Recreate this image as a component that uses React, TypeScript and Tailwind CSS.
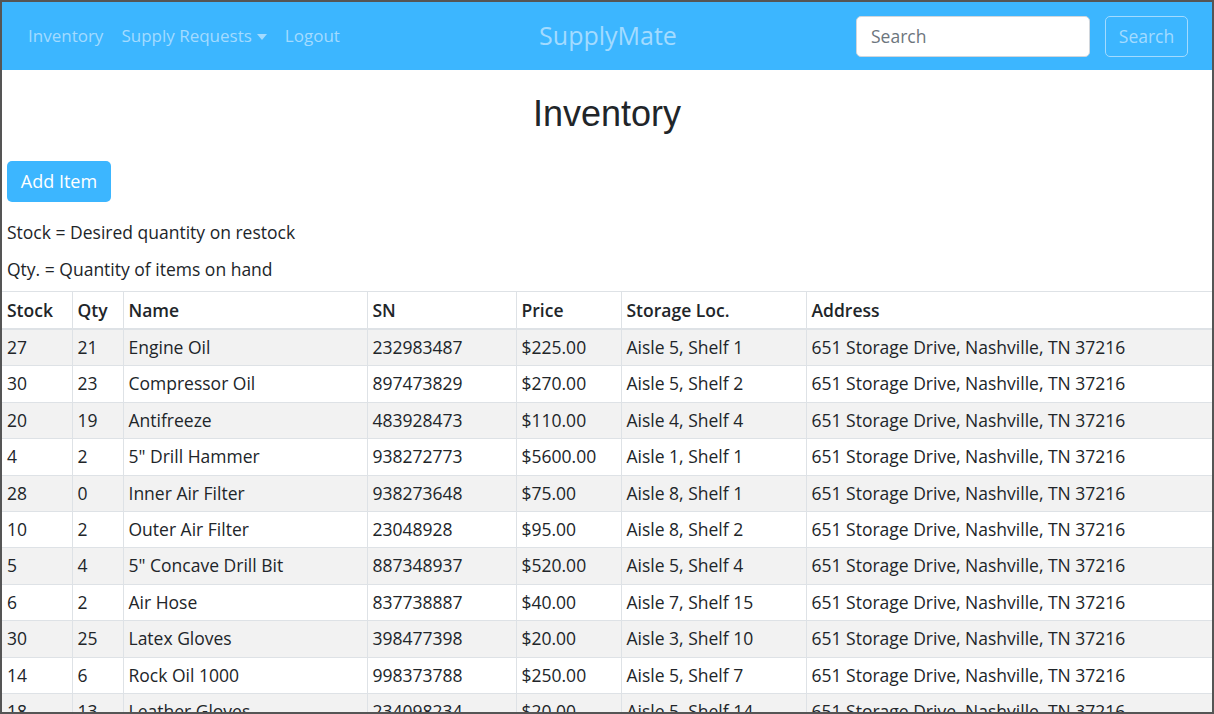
import { useState } from "react"

const items = [
  { stock: 27, qty: 21, name: "Engine Oil", sn: "232983487", price: "$225.00", loc: "Aisle 5, Shelf 1" },
  { stock: 30, qty: 23, name: "Compressor Oil", sn: "897473829", price: "$270.00", loc: "Aisle 5, Shelf 2" },
  { stock: 20, qty: 19, name: "Antifreeze", sn: "483928473", price: "$110.00", loc: "Aisle 4, Shelf 4" },
  { stock: 4, qty: 2, name: '5" Drill Hammer', sn: "938272773", price: "$5600.00", loc: "Aisle 1, Shelf 1" },
  { stock: 28, qty: 0, name: "Inner Air Filter", sn: "938273648", price: "$75.00", loc: "Aisle 8, Shelf 1" },
  { stock: 10, qty: 2, name: "Outer Air Filter", sn: "23048928", price: "$95.00", loc: "Aisle 8, Shelf 2" },
  { stock: 5, qty: 4, name: '5" Concave Drill Bit', sn: "887348937", price: "$520.00", loc: "Aisle 5, Shelf 4" },
  { stock: 6, qty: 2, name: "Air Hose", sn: "837738887", price: "$40.00", loc: "Aisle 7, Shelf 15" },
  { stock: 30, qty: 25, name: "Latex Gloves", sn: "398477398", price: "$20.00", loc: "Aisle 3, Shelf 10" },
  { stock: 14, qty: 6, name: "Rock Oil 1000", sn: "998373788", price: "$250.00", loc: "Aisle 5, Shelf 7" },
  { stock: 18, qty: 13, name: "Leather Gloves", sn: "234098234", price: "$20.00", loc: "Aisle 5, Shelf 14" },
]

const ADDRESS = "651 Storage Drive, Nashville, TN 37216"

function Navbar() {
  const [query, setQuery] = useState("")
  return (
    <nav className="flex h-[68px] items-center bg-[#3cb6ff] pl-[26px] pr-[24px] text-[17px]">
      <div className="flex flex-1 items-center gap-[18px] text-[#a3dbff]">
        <a>Inventory</a>
        <a className="flex items-center gap-[5px]">
          Supply Requests
          <span className="mt-[1px] h-0 w-0 border-x-[5px] border-t-[6px] border-x-transparent border-t-[#a3dbff]" />
        </a>
        <a>Logout</a>
      </div>
      <div className="text-[25px] text-[#a3dbff]">SupplyMate</div>
      <div className="flex flex-1 items-center justify-end gap-[15px]">
        <input
          value={query}
          onChange={(e) => setQuery(e.target.value)}
          placeholder="Search"
          className="h-[41px] w-[234px] rounded-[5px] border border-[#d0d6dc] bg-white px-[14px] text-[17.5px] text-gray-700 outline-none placeholder:text-[#6c757d]"
        />
        <button className="h-[41px] w-[83px] rounded-[5px] border border-[#a3dbff] text-[17.5px] text-[#a3dbff]">
          Search
        </button>
      </div>
    </nav>
  )
}

const cell = "border-l border-t border-[#dee2e6] px-[5px] py-[5px] leading-[25.4px]"
const head = "border-b-2 border-l border-[#dee2e6] px-[5px] py-[5px] leading-[26px] font-semibold"

export default function App() {
  return (
    <div
      className="h-[714px] overflow-hidden border-2 border-[#555] bg-white text-[17.5px] text-[#212529]"
      style={{ fontFamily: "'Open Sans', 'Noto Sans', sans-serif" }}
    >
      <Navbar />
      <h1
        className="mt-[22px] text-center text-[36px] leading-[44px]"
        style={{ fontFamily: "'Liberation Sans', Arial, sans-serif" }}
      >
        Inventory
      </h1>
      <div className="px-[5px]">
        <button className="mt-[25px] h-[41px] w-[104px] rounded-[5px] bg-[#3cb6ff] text-[18px] text-white">
          Add Item
        </button>
        <p className="mt-[17px] leading-[26px]">Stock = Desired quantity on restock</p>
        <p className="mt-[11px] leading-[26px]">Qty. = Quantity of items on hand</p>
      </div>
      <table className="mt-[9px] w-full border-collapse">
        <thead>
          <tr className="border-t border-[#dee2e6] text-left">
            <th className={`w-[70px] ${head} border-l-0`}>Stock</th>
            <th className={`w-[51px] ${head}`}>Qty</th>
            <th className={`w-[244px] ${head}`}>Name</th>
            <th className={`w-[149px] ${head}`}>SN</th>
            <th className={`w-[105px] ${head}`}>Price</th>
            <th className={`w-[185px] ${head}`}>Storage Loc.</th>
            <th className={head}>Address</th>
          </tr>
        </thead>
        <tbody>
          {items.map((it, i) => (
            <tr key={it.sn} className={i % 2 === 0 ? "bg-[#f2f2f2]" : "bg-white"}>
              <td className={`${cell} border-l-0`}>{it.stock}</td>
              <td className={cell}>{it.qty}</td>
              <td className={cell}>{it.name}</td>
              <td className={cell}>{it.sn}</td>
              <td className={cell}>{it.price}</td>
              <td className={cell}>{it.loc}</td>
              <td className={cell}>{ADDRESS}</td>
            </tr>
          ))}
        </tbody>
      </table>
    </div>
  )
}
